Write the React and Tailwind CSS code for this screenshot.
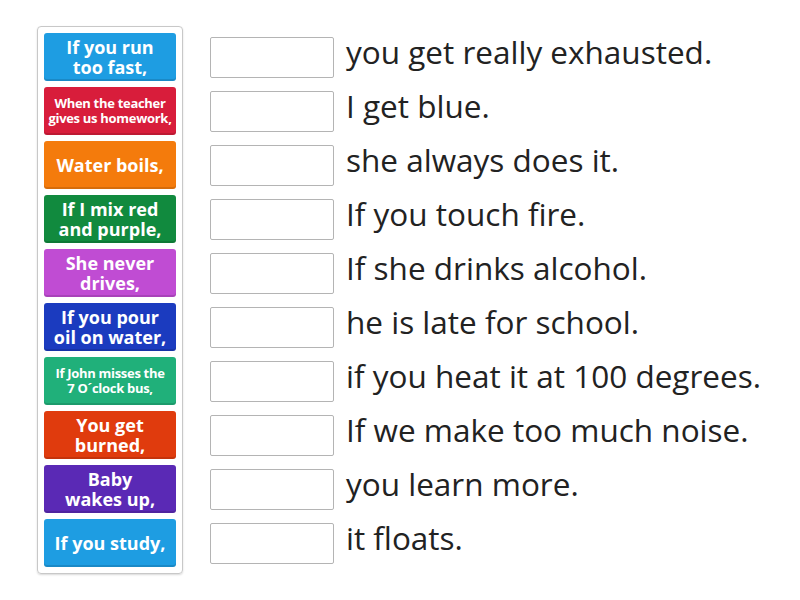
import React from "react";

const tiles = [
  { t: ["If you run", "too fast,"], c: "bg-[#1e9de2]", s: "big" },
  { t: ["When the teacher", "gives us homework,"], c: "bg-[#d81d3b]", s: "small" },
  { t: ["Water boils,"], c: "bg-[#f47b0c]", s: "big" },
  { t: ["If I mix red", "and purple,"], c: "bg-[#118a3e]", s: "big" },
  { t: ["She never", "drives,"], c: "bg-[#c04cd3]", s: "big" },
  { t: ["If you pour", "oil on water,"], c: "bg-[#1b3bbf]", s: "big" },
  { t: ["If John misses the", "7 O\u00b4clock bus,"], c: "bg-[#20b07a]", s: "small" },
  { t: ["You get", "burned,"], c: "bg-[#e03b0d]", s: "big" },
  { t: ["Baby", "wakes up,"], c: "bg-[#5a29b5]", s: "big" },
  { t: ["If you study,"], c: "bg-[#1e9de2]", s: "big" },
];

const answers = [
  "you get really exhausted.",
  "I get blue.",
  "she always does it.",
  "If you touch fire.",
  "If she drinks alcohol.",
  "he is late for school.",
  "if you heat it at 100 degrees.",
  "If we make too much noise.",
  "you learn more.",
  "it floats.",
];

export default function App() {
  return (
    <div
      className="w-[800px] h-[600px] bg-white flex"
      style={{ fontFamily: '"Open Sans", "Noto Sans", sans-serif' }}
    >
      <div className="ml-[37px] mt-[26px] w-[146px] h-[548px] border border-[#c8c8c8] rounded-[4px] shadow-[0_1px_2px_rgba(0,0,0,0.15)] px-[6px] pt-[6px] flex flex-col gap-[6px]">
        {tiles.map((tile, i) => (
          <div
            key={i}
            className={`${tile.c} h-[48px] rounded-[3px] shadow-[inset_0_-2px_0_rgba(0,0,0,0.12)] flex items-center justify-center text-white font-bold text-center ${
              tile.s === "small"
                ? "text-[13px] leading-[15px] tracking-[-0.3px]"
                : "text-[18px] leading-[20px]"
            }`}
          >
            <div className="whitespace-nowrap">
              {tile.t.map((l, j) => (
                <React.Fragment key={j}>
                  {j > 0 && <br />}
                  {l}
                </React.Fragment>
              ))}
            </div>
          </div>
        ))}
      </div>
      <div className="ml-[27px] mt-[30px] flex flex-col">
        {answers.map((a, i) => (
          <div key={i} className="h-[54px] flex items-center">
            <div className="w-[124px] h-[41px] border border-[#b4b4b4] rounded-[2px] bg-white" />
            <div className="ml-[12px] text-[31.5px] text-[#222] whitespace-nowrap leading-none pb-[10px]">
              {a}
            </div>
          </div>
        ))}
      </div>
    </div>
  );
}
